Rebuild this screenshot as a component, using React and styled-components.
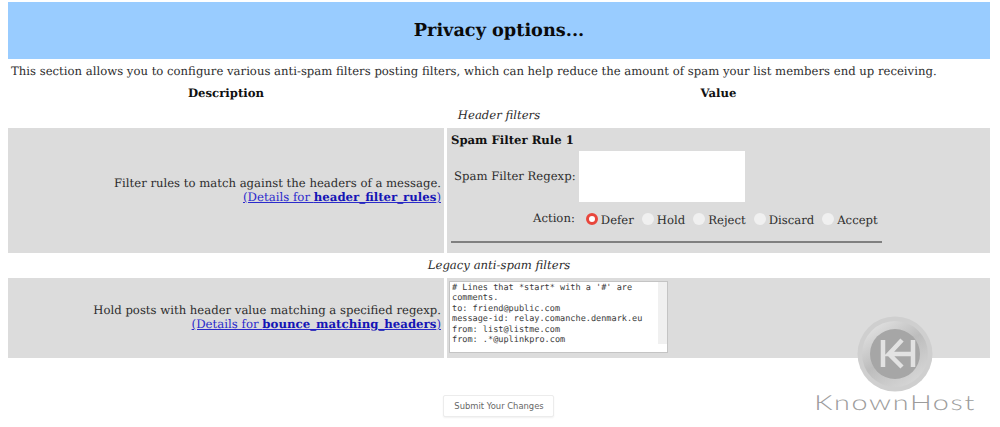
import React from 'react';
import styled, { createGlobalStyle } from 'styled-components';

const Global = createGlobalStyle`
  html, body { margin: 0; padding: 0; background: #fff; }
  body {
    font-family: "DejaVu Serif", serif;
    font-size: 11.67px;
    color: #2b2b2b;
    overflow: hidden;
    text-rendering: geometricPrecision;
  }
`;

const Page = styled.div`
  position: relative;
  width: 1000px;
  height: 427px;
  padding: 2px 10px 0 8px;
  box-sizing: border-box;
  overflow: hidden;
`;

const Banner = styled.h1`
  margin: 0;
  height: 57px;
  box-sizing: border-box;
  background: #99ccff;
  display: flex;
  align-items: center;
  justify-content: center;
  font-size: 17.7px;
  font-weight: bold;
  color: #0a0a0a;
`;

const Intro = styled.p`
  margin: 4px 0 0 3px;
  line-height: 16px;
  white-space: nowrap;
`;

const Columns = styled.div`
  display: grid;
  grid-template-columns: 436px 1fr;
  column-gap: 3px;
`;

const ColumnTitle = styled.div`
  margin-top: 6px;
  text-align: center;
  font-weight: bold;
  line-height: 16px;
  color: #111;
`;

const SectionTitle = styled.div`
  text-align: center;
  font-style: italic;
  line-height: 16px;
  margin: ${p => p.$top}px 0 ${p => p.$bottom}px;
`;

const Cell = styled.div`
  background: #dcdcdc;
  height: ${p => p.$height}px;
  box-sizing: border-box;
`;

const DescCell = styled(Cell)`
  text-align: right;
  padding: ${p => p.$pad}px 3px 0 0;
  line-height: 14px;
  display: flex;
  flex-direction: column;
`;

const Details = styled.a`
  color: #2a2acc;
  font-size: 11.75px;
  text-decoration: underline;
  b { font-weight: bold; color: #1515b5; }
`;

const RuleCell = styled(Cell)`
  padding: 4px 4px 0 4px;
`;

const RuleTitle = styled.div`
  font-weight: bold;
  line-height: 16px;
  color: #111;
`;

const RegexpRow = styled.div`
  display: flex;
  align-items: center;
  margin: 3px 0 0 3px;
  gap: 3px;
`;

const RegexpLabel = styled.label`
  margin-top: -2px;
`;

const RegexpBox = styled.div`
  width: 166px;
  height: 51px;
  background: #fff;
`;

const ActionRow = styled.div`
  display: flex;
  align-items: center;
  margin: 10px 0 0 82px;
  line-height: 16px;
`;

const ActionLabel = styled.span`
  margin: -4px 11px 0 0;
`;

const Radio = styled.span`
  display: inline-block;
  width: 12px;
  height: 12px;
  border-radius: 50%;
  box-sizing: border-box;
  background: ${p => p.$on ? '#fff' : '#f0f0f0'};
  border: ${p => p.$on ? '3.5px solid #e8463c' : '0'};
  margin: -3px 3px 0 0;
`;

const Choice = styled.span`
  display: inline-flex;
  align-items: center;
  margin-right: 8px;
`;

const Rule = styled.hr`
  margin: 13px 0 0 0;
  width: 431px;
  border: 0;
  height: 2px;
  background: #808080;
`;

const HeadersCell = styled(Cell)`
  padding: 3px 0 0 2px;
`;

const HeadersBox = styled.pre`
  position: relative;
  margin: 0;
  width: 219px;
  height: 72px;
  background: #fff;
  border: 1px solid #c4c4c4;
  box-sizing: border-box;
  padding: 1px 10px 0 2px;
  font-family: "DejaVu Sans Mono", monospace;
  font-size: 8.55px;
  line-height: 10.4px;
  white-space: pre-wrap;
  color: #3a3a3a;
  overflow: hidden;
  &::after {
    content: "";
    position: absolute;
    top: 0;
    right: 0;
    bottom: 8px;
    width: 9px;
    background: #f0f0f0;
  }
`;

const Actions = styled.div`
  display: flex;
  justify-content: center;
  margin-top: 37px;
  padding-right: 2px;
`;

const SubmitButton = styled.button`
  width: 111px;
  height: 22px;
  padding: 0 0 0 2px;
  background: #fff;
  border: 1px solid #ececec;
  border-radius: 2px;
  box-shadow: 0 1px 2px rgba(0,0,0,.06);
  font-family: "DejaVu Sans", sans-serif;
  font-size: 8.4px;
  color: #666;
`;

const Watermark = styled.div`
  position: absolute;
  left: 815px;
  top: 316px;
  width: 160px;
  display: flex;
  flex-direction: column;
  align-items: center;
`;

const Wordmark = styled.span`
  font-family: "Lato", sans-serif;
  font-weight: 300;
  font-size: 21px;
  line-height: 22px;
  letter-spacing: 1.2px;
  color: #9c9c9c;
  transform: scaleX(1.37);
`;

const KnownHostMark = () => (
  <svg width="76" height="76" viewBox="0 0 76 76">
    <defs>
      <linearGradient id="ring" x1="0.1" y1="0" x2="0.8" y2="1">
        <stop offset="0" stopColor="#e6e6e6" />
        <stop offset="0.5" stopColor="#bdbdbd" />
        <stop offset="1" stopColor="#d8d8d8" />
      </linearGradient>
    </defs>
    <circle cx="38" cy="38" r="37.5" fill="#cfcfcf" />
    <circle cx="38" cy="38" r="33" fill="url(#ring)" />
    <circle cx="38" cy="38" r="25" fill="#a6a6a6" />
    <path d="M26 24v27M45 24 32 38h24M32 38l13 13M56 24v27" stroke="#e2e2e2" strokeWidth="4.5" fill="none" />
  </svg>
);

const choices = ['Defer', 'Hold', 'Reject', 'Discard', 'Accept'];

const headerLines = `# Lines that *start* with a '#' are comments.
to: friend@public.com
message-id: relay.comanche.denmark.eu
from: list@listme.com
from: .*@uplinkpro.com`;

export default function App() {
  return (
    <Page>
      <Global />
      <Banner>Privacy options...</Banner>
      <Intro>This section allows you to configure various anti-spam filters posting filters, which can help reduce the amount of spam your list members end up receiving.</Intro>
      <Columns>
        <ColumnTitle>Description</ColumnTitle>
        <ColumnTitle>Value</ColumnTitle>
      </Columns>
      <SectionTitle $top={6} $bottom={5}>Header filters</SectionTitle>
      <Columns>
        <DescCell $height={125} $pad={48}>
          <span>Filter rules to match against the headers of a message.</span>
          <Details href="#">(Details for <b>header_filter_rules</b>)</Details>
        </DescCell>
        <RuleCell $height={125}>
          <RuleTitle>Spam Filter Rule 1</RuleTitle>
          <RegexpRow>
            <RegexpLabel>Spam Filter Regexp:</RegexpLabel>
            <RegexpBox />
          </RegexpRow>
          <ActionRow>
            <ActionLabel>Action:</ActionLabel>
            {choices.map((c, i) => (
              <Choice key={c}>
                <Radio $on={i === 0} />
                {c}
              </Choice>
            ))}
          </ActionRow>
          <Rule />
        </RuleCell>
      </Columns>
      <SectionTitle $top={4} $bottom={5}>Legacy anti-spam filters</SectionTitle>
      <Columns>
        <DescCell $height={80} $pad={25}>
          <span>Hold posts with header value matching a specified regexp.</span>
          <Details href="#">(Details for <b>bounce_matching_headers</b>)</Details>
        </DescCell>
        <HeadersCell $height={80}>
          <HeadersBox>{headerLines}</HeadersBox>
        </HeadersCell>
      </Columns>
      <Actions>
        <SubmitButton>Submit Your Changes</SubmitButton>
      </Actions>
      <Watermark>
        <KnownHostMark />
        <Wordmark>KnownHost</Wordmark>
      </Watermark>
    </Page>
  );
}
